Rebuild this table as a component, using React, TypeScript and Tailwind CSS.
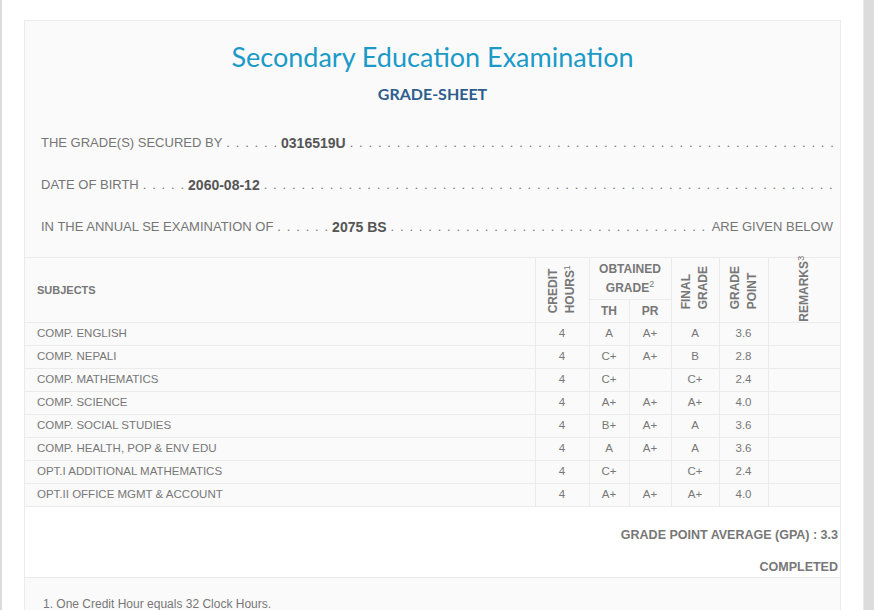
const subjects = [
  { name: 'COMP. ENGLISH', credit: 4, th: 'A', pr: 'A+', final: 'A', gp: '3.6' },
  { name: 'COMP. NEPALI', credit: 4, th: 'C+', pr: 'A+', final: 'B', gp: '2.8' },
  { name: 'COMP. MATHEMATICS', credit: 4, th: 'C+', pr: '', final: 'C+', gp: '2.4' },
  { name: 'COMP. SCIENCE', credit: 4, th: 'A+', pr: 'A+', final: 'A+', gp: '4.0' },
  { name: 'COMP. SOCIAL STUDIES', credit: 4, th: 'B+', pr: 'A+', final: 'A', gp: '3.6' },
  { name: 'COMP. HEALTH, POP & ENV EDU', credit: 4, th: 'A', pr: 'A+', final: 'A', gp: '3.6' },
  { name: 'OPT.I ADDITIONAL MATHEMATICS', credit: 4, th: 'C+', pr: '', final: 'C+', gp: '2.4' },
  { name: 'OPT.II OFFICE MGMT & ACCOUNT', credit: 4, th: 'A+', pr: 'A+', final: 'A+', gp: '4.0' },
]

const dots = '. '.repeat(120)

function Leader({ gap = '' }: { gap?: string }) {
  return (
    <span className={`min-w-0 flex-1 overflow-hidden whitespace-nowrap pl-[4px] [word-spacing:2.2px] ${gap}`}>
      {dots}
    </span>
  )
}

// vertical header text, read bottom to top
function Rotated({ children, pad }: { children: React.ReactNode; pad: string }) {
  return (
    <div className={`flex h-[64px] items-end justify-center overflow-visible ${pad}`}>
      <span className="rotate-180 text-left text-[12px] font-bold leading-[17px] [writing-mode:vertical-rl]">
        {children}
      </span>
    </div>
  )
}

function Sup({ n }: { n: string }) {
  return <span className="relative left-[3px] text-[9px] font-normal">{n}</span>
}

const cell = 'border border-[#ebebeb] text-center'

export default function App() {
  return (
    <div className="flex h-[610px] w-[874px] overflow-hidden bg-white font-['Liberation_Sans',Arial,sans-serif] text-[#777]">
      <div className="w-[2px] shrink-0 bg-[#dcdcdc]" />
      <div className="min-w-0 flex-1 px-[22px] pt-[20px]">
        <div className="border border-[#ebebeb] bg-[#fafafa]">
          <div className="pb-[9px] pt-[20px]">
            <h1 className="text-center font-['Lato',sans-serif] text-[27px] leading-[32px] text-[#1b9ac9]">
              Secondary Education Examination
            </h1>
            <h2 className="mt-[11px] text-center font-['Lato',sans-serif] text-[16px] font-bold leading-[20px] text-[#2e5d8e]">
              GRADE-SHEET
            </h2>
            <div className="mt-[18px] pl-[16px] pr-[7px] text-[13px] text-[#757575]">
              <div className="flex h-[42px] items-center whitespace-nowrap">
                <span>THE GRADE(S) SECURED BY</span>
                <span className="px-[4px] [word-spacing:2.2px]">. . . . . .</span>
                <b className="text-[14px] text-[#555]">0316519U</b>
                <Leader />
              </div>
              <div className="flex h-[42px] items-center whitespace-nowrap">
                <span>DATE OF BIRTH</span>
                <span className="px-[4px] [word-spacing:2.2px]">. . . . .</span>
                <b className="text-[14px] text-[#555]">2060-08-12</b>
                <Leader />
              </div>
              <div className="flex h-[42px] items-center whitespace-nowrap">
                <span>IN THE ANNUAL SE EXAMINATION OF</span>
                <span className="px-[4px] [word-spacing:2.2px]">. . . . . .</span>
                <b className="text-[14px] text-[#555]">2075 BS</b>
                <Leader gap="mr-[4px]" />
                <span>ARE GIVEN BELOW</span>
              </div>
            </div>
          </div>

          <table className="w-full table-fixed border-collapse text-[11.5px]">
            <colgroup>
              <col className="w-[510px]" />
              <col className="w-[54px]" />
              <col className="w-[40px]" />
              <col className="w-[42px]" />
              <col className="w-[48px]" />
              <col className="w-[49px]" />
              <col className="w-[72px]" />
            </colgroup>
            <thead className="font-bold text-[#777]">
              <tr className="h-[42px]">
                <th rowSpan={2} className="border border-l-0 border-[#ebebeb] pl-[12px] text-left text-[11px]">
                  SUBJECTS
                </th>
                <th rowSpan={2} className={`${cell} p-0 align-bottom`}>
                  <Rotated pad="pb-[9px]">
                    CREDIT
                    <br />
                    HOURS<Sup n="1" />
                  </Rotated>
                </th>
                <th colSpan={2} className={`${cell} text-[12px] leading-[19px]`}>
                  OBTAINED
                  <br />
                  GRADE<sup className="text-[9px] font-normal">2</sup>
                </th>
                <th rowSpan={2} className={`${cell} p-0 align-bottom`}>
                  <Rotated pad="pb-[13px]">
                    FINAL
                    <br />
                    GRADE
                  </Rotated>
                </th>
                <th rowSpan={2} className={`${cell} p-0 align-bottom`}>
                  <Rotated pad="pb-[13px]">
                    GRADE
                    <br />
                    POINT
                  </Rotated>
                </th>
                <th rowSpan={2} className="border border-r-0 border-[#ebebeb] p-0 text-center align-bottom">
                  <Rotated pad="pb-0">
                    REMARKS<Sup n="3" />
                  </Rotated>
                </th>
              </tr>
              <tr className="h-[23px]">
                <th className={`${cell} text-[12px]`}>TH</th>
                <th className={`${cell} text-[12px]`}>PR</th>
              </tr>
            </thead>
            <tbody>
              {subjects.map((s) => (
                <tr key={s.name} className="h-[23px]">
                  <td className="border border-l-0 border-[#ebebeb] pl-[12px] text-left">{s.name}</td>
                  <td className={cell}>{s.credit}</td>
                  <td className={cell}>{s.th}</td>
                  <td className={cell}>{s.pr}</td>
                  <td className={cell}>{s.final}</td>
                  <td className={cell}>{s.gp}</td>
                  <td className="border border-r-0 border-[#ebebeb]" />
                </tr>
              ))}
            </tbody>
          </table>

          <div className="flex h-[71px] flex-col items-end border-b border-[#ebebeb] bg-white pr-[2px] text-[12.5px] font-bold text-[#777]">
            <div className="mt-[20px] leading-[16px]">GRADE POINT AVERAGE (GPA) : 3.3</div>
            <div className="mt-[16px] leading-[16px]">COMPLETED</div>
          </div>

          <div className="pl-[18px] pt-[18px] text-[12px] leading-[16px] text-[#777]">
            <p>1. One Credit Hour equals 32 Clock Hours.</p>
          </div>
        </div>
      </div>
      <div className="w-[11px] shrink-0 border-l border-[#e8e8e8] bg-[#dcdcdc]" />
    </div>
  )
}
